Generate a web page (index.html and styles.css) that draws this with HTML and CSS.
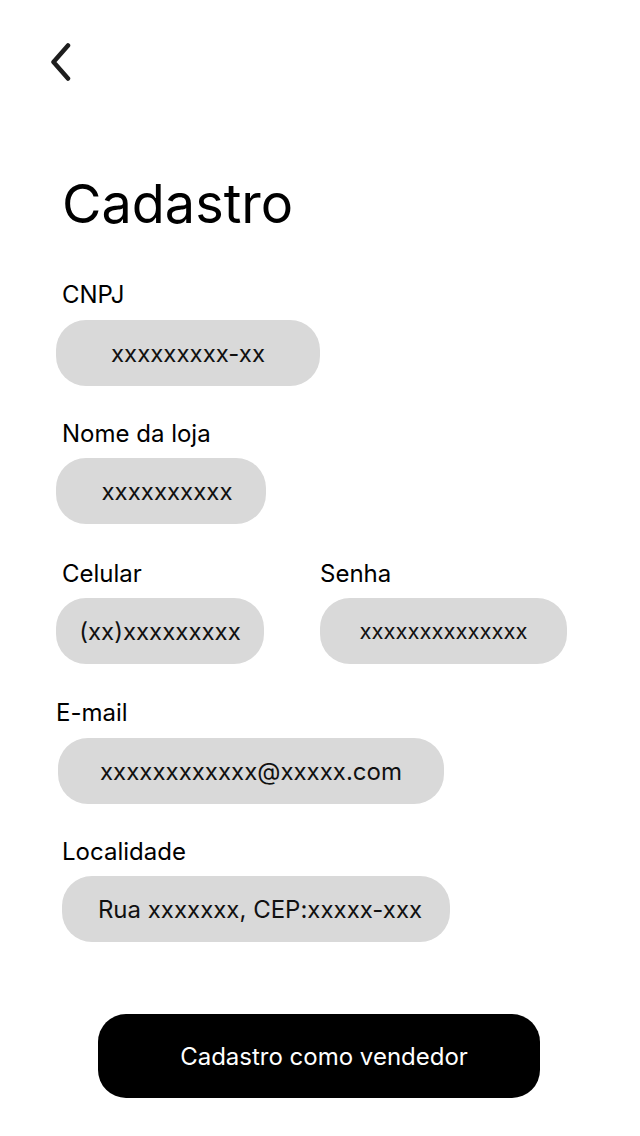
FILE: index.html
```html
<!DOCTYPE html>
<html lang="pt-BR">
<head>
<meta charset="utf-8">
<title>Cadastro</title>
<link rel="stylesheet" href="styles.css">
</head>
<body>
<main class="page">
  <header class="topbar">
    <button class="back" aria-label="Voltar">
      <svg width="22" height="38" viewBox="0 0 22 38" aria-hidden="true">
        <polyline points="18,2.5 3.5,19 18,35.5" fill="none" stroke="#1e1e1e" stroke-width="4.5" stroke-linecap="round" stroke-linejoin="round"/>
      </svg>
    </button>
  </header>

  <h1 class="title">Cadastro</h1>

  <form class="form">
    <div class="field f-cnpj">
      <label class="label">CNPJ</label>
      <div class="input w-cnpj">xxxxxxxxx-xx</div>
    </div>

    <div class="field f-nome">
      <label class="label">Nome da loja</label>
      <div class="input w-nome">xxxxxxxxxx</div>
    </div>

    <div class="row">
      <div class="field f-cel">
        <label class="label">Celular</label>
        <div class="input w-cel">(xx)xxxxxxxxx</div>
      </div>
      <div class="field f-senha">
        <label class="label">Senha</label>
        <div class="input w-senha">xxxxxxxxxxxxxx</div>
      </div>
    </div>

    <div class="field f-email">
      <label class="label">E-mail</label>
      <div class="input w-email">xxxxxxxxxxxx@xxxxx.com</div>
    </div>

    <div class="field f-local">
      <label class="label">Localidade</label>
      <div class="input w-local">Rua xxxxxxx, CEP:xxxxx-xxx</div>
    </div>

    <div class="actions">
      <button type="button" class="submit">Cadastro como vendedor</button>
    </div>
  </form>
</main>
</body>
</html>
```

FILE: styles.css
```css
* { box-sizing: border-box; }

html, body {
  margin: 0;
  padding: 0;
  background: #ffffff;
}

body {
  font-family: Inter, "Noto Sans", "Liberation Sans", sans-serif;
  color: #000;
}

.page {
  width: 640px;
  min-height: 1136px;
  display: flex;
  flex-direction: column;
}

.topbar {
  padding: 43px 0 0 50px;
  height: 81px;
}

.back {
  display: block;
  padding: 0;
  margin: 0;
  border: 0;
  background: none;
  width: 22px;
  height: 38px;
}

.back svg { display: block; }

.title {
  margin: 96px 0 0 62px;
  font-size: 54px;
  line-height: 54px;
  font-weight: 400;
  letter-spacing: 0;
}

.form {
  display: flex;
  flex-direction: column;
  margin: 0;
}

.field {
  display: flex;
  flex-direction: column;
  align-items: flex-start;
}

.label {
  font-size: 24px;
  line-height: 24px;
  padding-left: 6px;
  margin-bottom: 13px;
}

.input {
  height: 66px;
  border-radius: 30px;
  background: #d9d9d9;
  display: flex;
  align-items: center;
  justify-content: center;
  font-size: 24px;
  color: #111;
  white-space: nowrap;
}

.f-cnpj { margin: 52px 0 0 56px; }
.f-nome { margin: 36px 0 0 56px; }
.f-nome .label { margin-bottom: 12px; }
.row {
  display: flex;
  margin: 38px 0 0 56px;
  gap: 56px;
}
.row .label { margin-bottom: 12px; }
.f-senha .label { padding-left: 0; }
.f-email { margin: 37px 0 0 58px; }
.f-email .label { padding-left: 0; margin-left: -2px; }
.f-local { margin: 36px 0 0 62px; }
.f-local .label { padding-left: 0; margin-bottom: 12px; }

.w-cnpj { width: 264px; }
.w-nome { width: 210px; padding-left: 12px; }
.w-cel { width: 208px; }
.w-senha { width: 247px; font-size: 22px; }
.w-email { width: 386px; }
.w-local { width: 388px; padding-left: 8px; }

.actions {
  margin: 72px 0 0 98px;
}

.submit {
  width: 442px;
  height: 84px;
  border: 0;
  border-radius: 28px;
  background: #000;
  color: #fff;
  font-family: inherit;
  font-size: 24px;
  padding: 0 0 0 10px;
}
```
